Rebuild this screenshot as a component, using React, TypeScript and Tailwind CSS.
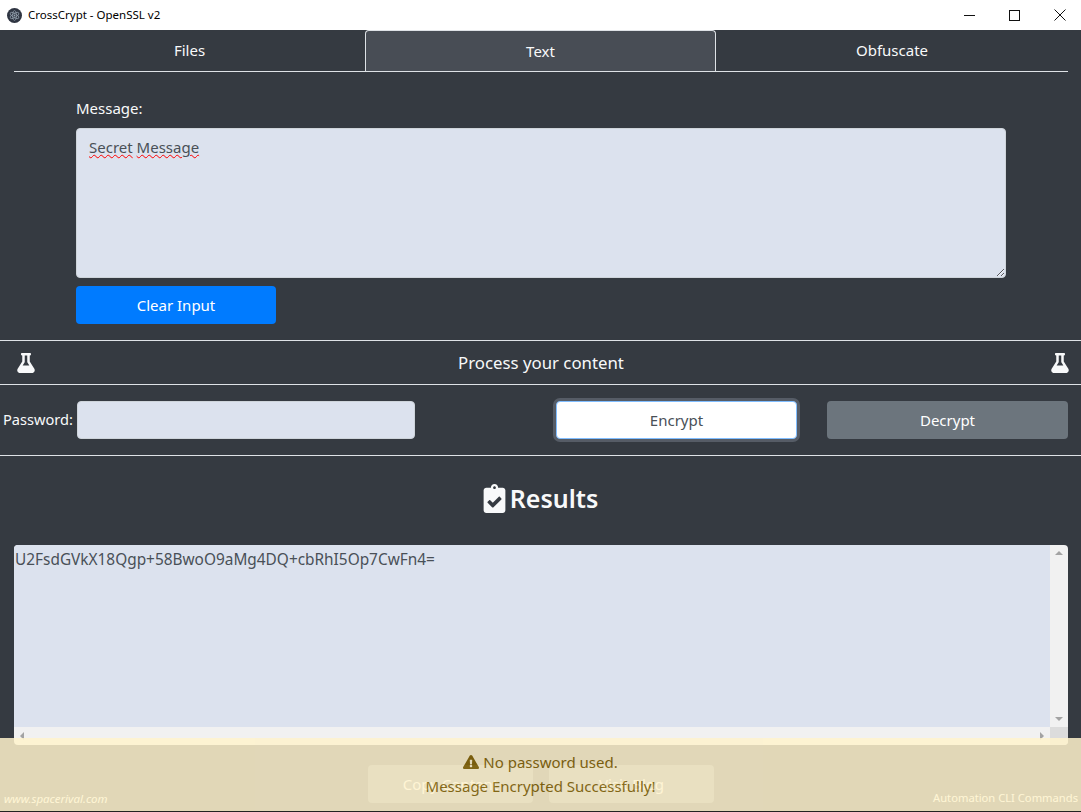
import { FaFlask, FaClipboardCheck, FaExclamationTriangle } from 'react-icons/fa';

function AppLogo() {
  return (
    <svg width="15" height="15" viewBox="0 0 30 30" className="shrink-0">
      <circle cx="15" cy="15" r="15" fill="#2f3542" />
      <g fill="none" stroke="#9aa7b5" strokeWidth="1.3">
        <ellipse cx="15" cy="15" rx="10" ry="4" transform="rotate(30 15 15)" />
        <ellipse cx="15" cy="15" rx="10" ry="4" transform="rotate(90 15 15)" />
        <ellipse cx="15" cy="15" rx="10" ry="4" transform="rotate(150 15 15)" />
      </g>
      <circle cx="15" cy="15" r="1.8" fill="#9aa7b5" />
    </svg>
  );
}

function TitleBar() {
  return (
    <div className="h-[30px] shrink-0 bg-white flex items-center pl-[7px] text-[11.5px] text-black">
      <AppLogo />
      <span className="ml-[6px]">CrossCrypt - OpenSSL v2</span>
      <div className="ml-auto flex h-full items-center pr-px">
        <div className="w-[45px] flex justify-center pl-[4px]">
          <svg width="11" height="11" viewBox="0 0 11 11"><path d="M0 5.5h11" stroke="#111" /></svg>
        </div>
        <div className="w-[45px] flex justify-center pl-[4px]">
          <svg width="11" height="11" viewBox="0 0 11 11"><rect x="0.5" y="0.5" width="10" height="10" fill="none" stroke="#111" /></svg>
        </div>
        <div className="w-[45px] flex justify-center pl-[4px]">
          <svg width="12" height="12" viewBox="0 0 12 12"><path d="M0.5 0.5l11 11M11.5 0.5l-11 11" stroke="#111" /></svg>
        </div>
      </div>
    </div>
  );
}

function Tabs() {
  return (
    <div className="ml-[14px] mr-[13px] h-[42px] shrink-0 grid grid-cols-[351px_351px_1fr] border-b border-[#dee2e6] text-[#f8f9fa]">
      <div className="flex items-center justify-center">Files</div>
      <div className="flex items-center justify-center bg-[#484d55] border border-b-0 border-[#dee2e6] rounded-t-[4px]">Text</div>
      <div className="flex items-center justify-center">Obfuscate</div>
    </div>
  );
}

function Triangle({ dir }: { dir: 'up' | 'down' | 'left' | 'right' }) {
  const points = {
    up: '0,4 4,0 8,4',
    down: '0,0 8,0 4,4',
    left: '4,0 4,8 0,4',
    right: '0,0 4,4 0,8',
  }[dir];
  const wide = dir === 'up' || dir === 'down';
  return (
    <svg width={wide ? 8 : 4} height={wide ? 4 : 8}>
      <polygon points={points} fill="#a3a3a3" />
    </svg>
  );
}

function ResultsBox() {
  return (
    <div className="ml-[14px] mr-[13px] h-[200px] shrink-0 rounded-[4px] overflow-hidden bg-[#f1f1f1] flex flex-col">
      <div className="flex-1 flex min-h-0">
        <div className="flex-1 bg-[#dce2ee] text-[#495057] text-[15.4px] pl-px pt-[3px]">U2FsdGVkX18Qgp+58BwoO9aMg4DQ+cbRhI5Op7CwFn4=</div>
        <div className="w-[18px] flex flex-col items-center justify-between py-[6px]">
          <Triangle dir="up" />
          <Triangle dir="down" />
        </div>
      </div>
      <div className="h-[18px] flex shrink-0">
        <div className="flex-1 flex items-center justify-between px-[6px]">
          <Triangle dir="left" />
          <Triangle dir="right" />
        </div>
        <div className="w-[18px] bg-[#dcdcdc]" />
      </div>
    </div>
  );
}

export default function App() {
  return (
    <div className="relative h-[812px] overflow-hidden flex flex-col bg-[#353a41] text-white text-[15px] font-['Noto_Sans','Open_Sans',sans-serif]">
      <TitleBar />
      <Tabs />

      {/* message input */}
      <div className="pt-[24px] pl-[76px] pr-[75px] pb-[16px] shrink-0">
        <div className="h-[24px] mb-[8px] leading-[24px] text-[#f8f9fa]">Message:</div>
        <div className="h-[150px] rounded-[4px] border border-[#ced4da] bg-[#dce2ee] text-[#495057] px-[12px] pt-[7px] resize overflow-auto">
          <span className="underline decoration-wavy decoration-[#ff0000] decoration-1">Secret</span>{' '}
          <span className="underline decoration-wavy decoration-[#ff0000] decoration-1">Message</span>
        </div>
        <button className="mt-[8px] w-[200px] h-[38px] rounded-[4px] bg-[#007bff] text-white">Clear Input</button>
      </div>

      {/* process heading */}
      <div className="h-[45px] shrink-0 border-y border-[#dee2e6] flex items-center justify-between pl-[16px] pr-[11px]">
        <FaFlask className="text-[20px] text-[#f8f9fa]" />
        <span className="text-[16.8px] text-[#f8f9fa] mr-[4px]">Process your content</span>
        <FaFlask className="text-[20px] text-[#f8f9fa]" />
      </div>

      {/* password + actions */}
      <div className="h-[71px] shrink-0 border-b border-[#dee2e6] flex items-center pl-[3px] pr-[13px]">
        <span className="w-[74px] text-[14.6px] text-[#f8f9fa]">Password:</span>
        <input className="w-[338px] h-[38px] rounded-[4px] border border-[#ced4da] bg-[#dce2ee]" />
        <button className="ml-[141px] w-[241px] h-[38px] rounded-[4px] bg-white border border-[#80bdff] ring-[3px] ring-[#565c66] text-[#495057]">Encrypt</button>
        <button className="ml-[30px] w-[241px] h-[38px] rounded-[4px] bg-[#6c757d] text-white">Decrypt</button>
      </div>

      {/* results */}
      <div className="h-[89px] shrink-0 flex items-center justify-center gap-[1px] pb-[4px] pr-[3px]">
        <FaClipboardCheck className="text-[29px] text-[#f8f9fa]" />
        <span className="text-[25px] font-semibold text-[#f8f9fa]">Results</span>
      </div>
      <ResultsBox />

      {/* footer */}
      <div className="mt-[20px] flex items-end pl-[4px] pr-[3px] text-[11.2px]">
        <div className="flex-1 italic text-white -mb-[4px] text-[11.5px]">www.spacerival.com</div>
        <div className="flex gap-[16px] text-[15px]">
          <div className="w-[165px] h-[38px] rounded-[4px] bg-[#6c757d] flex items-center justify-center">Copy Content</div>
          <div className="w-[165px] h-[38px] rounded-[4px] bg-[#6c757d] flex items-center justify-center">Visit Blog</div>
        </div>
        <div className="flex-1 text-right text-white -mb-[4px]">Automation CLI Commands</div>
      </div>

      {/* toast */}
      <div className="absolute left-0 right-0 bottom-px h-[73px] bg-[#fff3cd] opacity-85 text-[#856404] flex flex-col items-center pt-[12px]">
        <div className="flex items-center gap-[4px] h-[24px]">
          <FaExclamationTriangle className="text-[16px]" />
          <span>No password used.</span>
        </div>
        <div className="h-[24px] mt-px">Message Encrypted Successfully!</div>
      </div>
      <div className="absolute left-0 right-0 bottom-0 h-px bg-[#222]" />
    </div>
  );
}
